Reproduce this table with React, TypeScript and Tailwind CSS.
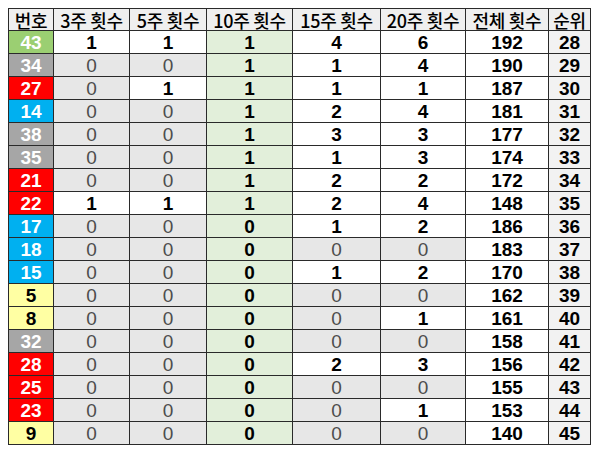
import React from 'react';

type Row = {
    num: number;
    color: string;
    counts: number[];
    total: number;
    rank: number;
};

const numColors: Record<string, string> = {
    green: 'bg-[#9bcf72] text-white',
    gray: 'bg-[#a6a6a6] text-white',
    red: 'bg-[#ff0000] text-white',
    blue: 'bg-[#00b0f0] text-white',
    yellow: 'bg-[#ffffa3] text-black',
};

const rows: Row[] = [
    { num: 43, color: 'green', counts: [1, 1, 1, 4, 6], total: 192, rank: 28 },
    { num: 34, color: 'gray', counts: [0, 0, 1, 1, 4], total: 190, rank: 29 },
    { num: 27, color: 'red', counts: [0, 1, 1, 1, 1], total: 187, rank: 30 },
    { num: 14, color: 'blue', counts: [0, 0, 1, 2, 4], total: 181, rank: 31 },
    { num: 38, color: 'gray', counts: [0, 0, 1, 3, 3], total: 177, rank: 32 },
    { num: 35, color: 'gray', counts: [0, 0, 1, 1, 3], total: 174, rank: 33 },
    { num: 21, color: 'red', counts: [0, 0, 1, 2, 2], total: 172, rank: 34 },
    { num: 22, color: 'red', counts: [1, 1, 1, 2, 4], total: 148, rank: 35 },
    { num: 17, color: 'blue', counts: [0, 0, 0, 1, 2], total: 186, rank: 36 },
    { num: 18, color: 'blue', counts: [0, 0, 0, 0, 0], total: 183, rank: 37 },
    { num: 15, color: 'blue', counts: [0, 0, 0, 1, 2], total: 170, rank: 38 },
    { num: 5, color: 'yellow', counts: [0, 0, 0, 0, 0], total: 162, rank: 39 },
    { num: 8, color: 'yellow', counts: [0, 0, 0, 0, 1], total: 161, rank: 40 },
    { num: 32, color: 'gray', counts: [0, 0, 0, 0, 0], total: 158, rank: 41 },
    { num: 28, color: 'red', counts: [0, 0, 0, 2, 3], total: 156, rank: 42 },
    { num: 25, color: 'red', counts: [0, 0, 0, 0, 0], total: 155, rank: 43 },
    { num: 23, color: 'red', counts: [0, 0, 0, 0, 1], total: 153, rank: 44 },
    { num: 9, color: 'yellow', counts: [0, 0, 0, 0, 0], total: 140, rank: 45 },
];

const headers = ['번호', '3주 횟수', '5주 횟수', '10주 횟수', '15주 횟수', '20주 횟수', '전체 횟수', '순위'];
const widths = ['w-[45px]', 'w-[76px]', 'w-[77px]', 'w-[86px]', 'w-[88px]', 'w-[85px]', 'w-[83px]', 'w-[42px]'];

const cellBase = 'border border-[#2a2a2a] p-0 text-center leading-none whitespace-nowrap';
const digits = "font-['Liberation_Sans',Arial,sans-serif] text-[19px]";

const countCell = (value: number, idx: number) => {
    // 10주 column is always shaded green
    if (idx === 2) return 'bg-[#e2efda] text-black font-bold';
    if (value === 0) return 'bg-[#e7e7e7] text-[#4d4d4d] font-normal';
    return 'bg-white text-black font-bold';
};

export default function App() {
    return (
        <div className="min-h-[451px] w-[600px] bg-white p-2 font-['Noto_Sans_CJK_KR','Noto_Sans',sans-serif]">
            <table className="table-fixed border-collapse">
                <colgroup>
                    {widths.map((w, i) => (
                        <col key={i} className={w} />
                    ))}
                </colgroup>
                <thead>
                    <tr className="h-[22px]">
                        {headers.map((h) => (
                            <th key={h} className={`${cellBase} bg-[#efefef] text-[18px] font-medium tracking-[-0.3px] text-black`}>
                                {h}
                            </th>
                        ))}
                    </tr>
                </thead>
                <tbody className={digits}>
                    {rows.map((r) => (
                        <tr key={r.num} className="h-[23px]">
                            <td className={`${cellBase} font-bold ${numColors[r.color]}`}>{r.num}</td>
                            {r.counts.map((c, i) => (
                                <td key={i} className={`${cellBase} ${countCell(c, i)}`}>
                                    {c}
                                </td>
                            ))}
                            <td className={`${cellBase} bg-white font-bold text-black`}>{r.total}</td>
                            <td className={`${cellBase} bg-[#f2f2f2] font-bold text-black`}>{r.rank}</td>
                        </tr>
                    ))}
                </tbody>
            </table>
        </div>
    );
}
